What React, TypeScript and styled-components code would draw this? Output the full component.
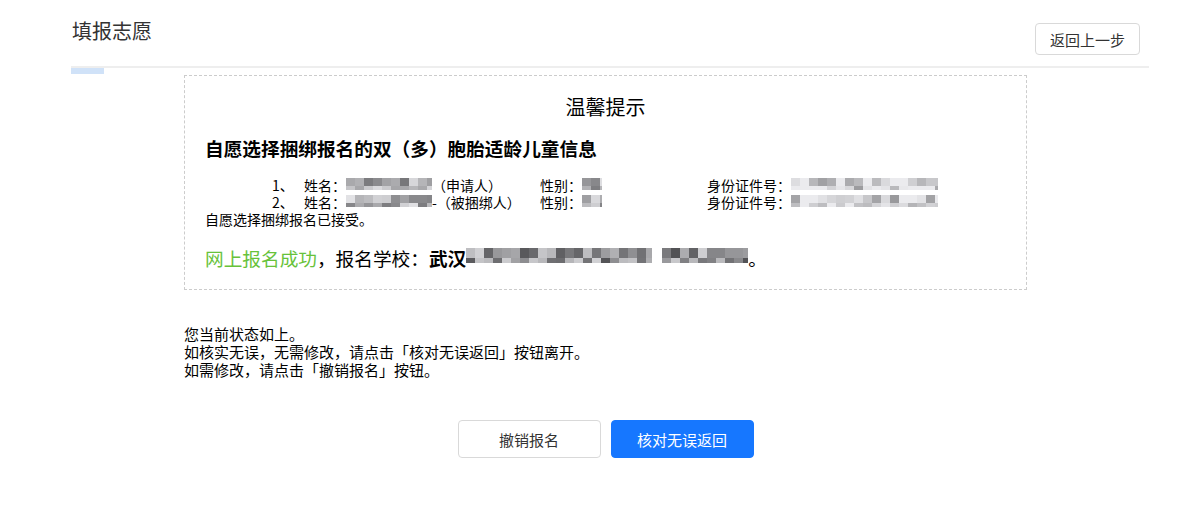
import React from "react";
import styled, { createGlobalStyle } from "styled-components";

const GlobalStyle = createGlobalStyle`
  html, body {
    margin: 0;
    padding: 0;
    background: #fff;
  }
  body {
    font-family: "Noto Sans CJK SC", "Noto Sans", sans-serif;
    color: #000;
  }
`;

const Page = styled.div`
  width: 1078px;
  margin-left: 71px;
`;

const Header = styled.div`
  display: flex;
  justify-content: space-between;
  align-items: flex-start;
  height: 68px;
  padding-right: 9px;
  border-bottom: 2px solid #eeeeee;
  box-sizing: border-box;
`;

const PageTitle = styled.h1`
  margin: 0;
  padding: 17px 0 0 1px;
  font-size: 20px;
  line-height: 28px;
  font-weight: 400;
  color: #333;
`;

const GhostButton = styled.button`
  margin-top: 23px;
  height: 32px;
  padding: 0 14px;
  border: 1px solid #d9d9d9;
  border-radius: 4px;
  background: #fff;
  color: #333;
  font-family: inherit;
  font-size: 15px;
  cursor: pointer;
`;

const TabMark = styled.div`
  width: 33px;
  height: 6px;
  background: #d0e2f8;
`;

const Content = styled.div`
  width: 843px;
  margin-left: 113px;
  margin-top: 1px;
`;

const NoticeBox = styled.div`
  border: 1px dashed #cccccc;
  padding: 17px 20px 18px 20px;
`;

const NoticeTitle = styled.div`
  text-align: center;
  font-size: 20px;
  line-height: 28px;
  color: #000;
`;

const SectionTitle = styled.div`
  margin-top: 14px;
  font-size: 18.67px;
  line-height: 26px;
  font-weight: 700;
`;

const List = styled.div`
  margin-top: 16px;
  font-size: 14px;
  line-height: 17px;
`;

const Row = styled.div<{ $indent?: number }>`
  display: flex;
  align-items: center;
  height: 17px;
  padding-left: ${(p) => p.$indent ?? 0}px;
  white-space: nowrap;
`;

const Cell = styled.span<{ $w: number }>`
  display: inline-flex;
  align-items: center;
  width: ${(p) => p.$w}px;
  flex: none;
`;

const Mosaic = styled.span<{ $w: number; $h?: number; $bg: string }>`
  display: inline-block;
  width: ${(p) => p.$w}px;
  height: ${(p) => p.$h ?? 16}px;
  background: ${(p) => p.$bg};
  filter: blur(0.6px);
  flex: none;
`;

const ResultLine = styled.div`
  margin-top: 17px;
  display: flex;
  align-items: center;
  font-size: 18.67px;
  line-height: 26px;
  white-space: nowrap;
`;

const Success = styled.span`
  color: #67c23a;
`;

const Strong = styled.span`
  font-weight: 700;
`;

const Hint = styled.div`
  margin-top: 35px;
  font-size: 15px;
  line-height: 18px;
  color: #000;
`;

const Actions = styled.div`
  display: flex;
  justify-content: center;
  gap: 10px;
  margin-top: 41px;
`;

const ActionButton = styled.button<{ $primary?: boolean }>`
  width: 143px;
  height: 38px;
  border-radius: 4px;
  border: 1px solid ${(p) => (p.$primary ? "#1677ff" : "#d9d9d9")};
  background: ${(p) => (p.$primary ? "#1677ff" : "#fff")};
  color: ${(p) => (p.$primary ? "#fff" : "#333")};
  font-family: inherit;
  font-size: 15px;
  cursor: pointer;
`;

// deterministic grey tiles, so the hidden values read as a pixelated blur
const tiles = (w: number, seed: number, light = 170, dark = 110, cell = 9) => {
  const rows: string[] = [];
  for (let r = 0; r < 2; r++) {
    let x = 0;
    let s = seed + r * 31;
    const stops: string[] = [];
    while (x < w) {
      s = (s * 9301 + 49297) % 233280;
      const v = Math.round(dark + (s / 233280) * (light - dark + 60));
      const c = Math.min(v, 235);
      const end = Math.min(x + cell, w);
      stops.push(`rgb(${c},${c},${c + 3}) ${x}px ${end}px`);
      x = end;
    }
    rows.push(`linear-gradient(90deg, ${stops.join(", ")}) 0 ${r * 50}% / 100% 50% no-repeat`);
  }
  return rows.join(", ");
};

const Blur = ({ w, seed, h, light, dark }: { w: number; seed: number; h?: number; light?: number; dark?: number }) => (
  <Mosaic $w={w} $h={h} $bg={tiles(w, seed, light, dark)} />
);

export default function App() {
  return (
    <>
      <GlobalStyle />
      <Page>
        <Header>
          <PageTitle>填报志愿</PageTitle>
          <GhostButton>返回上一步</GhostButton>
        </Header>
        <TabMark />

        <Content>
          <NoticeBox>
            <NoticeTitle>温馨提示</NoticeTitle>
            <SectionTitle>自愿选择捆绑报名的双（多）胞胎适龄儿童信息</SectionTitle>
            <List>
              <Row $indent={67}>
                <Cell $w={32}>1、</Cell>
                <Cell $w={236}>
                  姓名：<Blur w={86} seed={7} />（申请人）
                </Cell>
                <Cell $w={167}>
                  性别：<Blur w={20} seed={3} />
                </Cell>
                <Cell $w={240}>
                  身份证件号：<Blur w={147} seed={11} light={200} dark={150} />
                </Cell>
              </Row>
              <Row $indent={67}>
                <Cell $w={32}>2、</Cell>
                <Cell $w={236}>
                  姓名：<Blur w={86} seed={19} />-（被捆绑人）
                </Cell>
                <Cell $w={167}>
                  性别：<Blur w={20} seed={5} />
                </Cell>
                <Cell $w={240}>
                  身份证件号：<Blur w={147} seed={23} light={200} dark={150} />
                </Cell>
              </Row>
              <Row>自愿选择捆绑报名已接受。</Row>
            </List>
            <ResultLine>
              <Success>网上报名成功</Success>，报名学校：<Strong>武汉</Strong>
              <Blur w={186} seed={41} h={20} light={150} dark={80} />
              <Mosaic $w={10} $h={20} $bg="#fff" />
              <Blur w={86} seed={53} h={20} light={150} dark={80} />
              。
            </ResultLine>
          </NoticeBox>

          <Hint>
            您当前状态如上。
            <br />
            如核实无误，无需修改，请点击「核对无误返回」按钮离开。
            <br />
            如需修改，请点击「撤销报名」按钮。
          </Hint>

          <Actions>
            <ActionButton>撤销报名</ActionButton>
            <ActionButton $primary>核对无误返回</ActionButton>
          </Actions>
        </Content>
      </Page>
    </>
  );
}
